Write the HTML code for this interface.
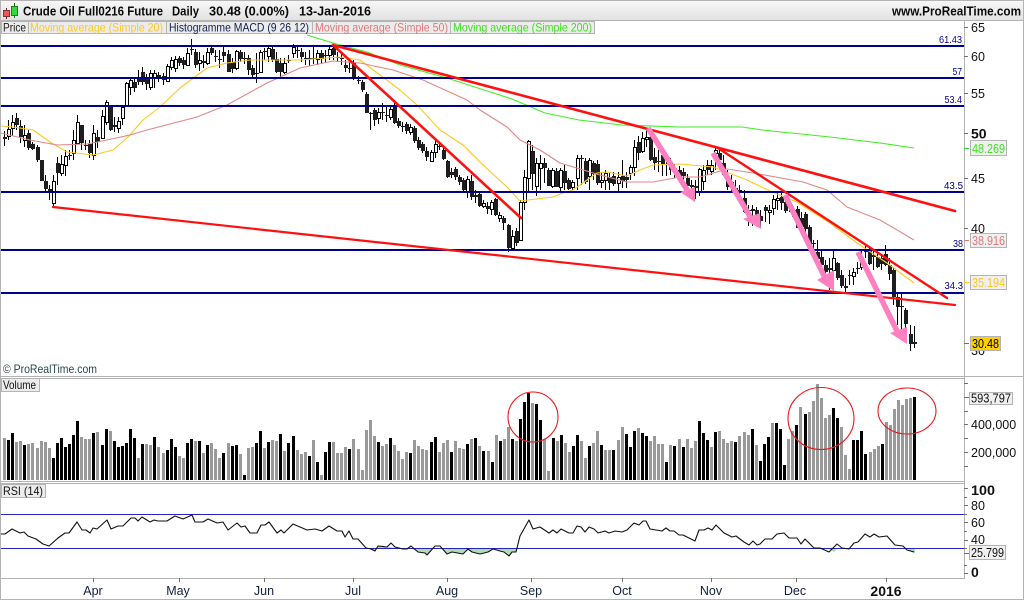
<!DOCTYPE html>
<html><head><meta charset="utf-8"><title>Crude Oil Chart</title>
<style>
html,body{margin:0;padding:0;background:#fff;width:1024px;height:600px;overflow:hidden}
svg{display:block;font-family:"Liberation Sans",sans-serif}
</style></head><body>
<svg width="1024" height="600" viewBox="0 0 1024 600" xmlns="http://www.w3.org/2000/svg">
<defs><linearGradient id="hd" x1="0" y1="0" x2="0" y2="1"><stop offset="0" stop-color="#f8f8f8"/><stop offset="1" stop-color="#e2e2e2"/></linearGradient></defs>
<rect width="1024" height="600" fill="#fff"/>
<rect x="0" y="0" width="1024" height="20" fill="url(#hd)"/>

<!-- candle wicks -->
<path shape-rendering="crispEdges" stroke="#000" stroke-width="1" fill="none" d="M4.5 131V146M8.5 120V140M12.5 115V136M16.5 113V130M20.5 120V143M24.5 125V147M28.5 130V150M32.5 142V150M37.5 145V162M41.5 160V181M45.5 175V192M49.5 185V200M53.5 175V207M57.5 157V185M61.5 155V176M65.5 150V176M69.5 150V160M73.5 130V160M77.5 115V143M81.5 125V150M85.5 140V150M89.5 140V158M93.5 125V160M97.5 130V148M102.5 110V138M106.5 100V125M110.5 105V131M114.5 117V132M118.5 117V133M122.5 105V125M126.5 82V106M130.5 78V95M134.5 78V92M138.5 70V85M142.5 67V85M146.5 74V90M150.5 70V90M154.5 70V88M158.5 72V82M163.5 73V85M167.5 64V82M171.5 57V70M175.5 56V72M179.5 56V66M183.5 57V69M187.5 48V66M191.5 39V55M195.5 49V68M199.5 52V71M203.5 55V68M207.5 48V65M211.5 45V55M215.5 50V62M219.5 50V68M223.5 47V62M228.5 50V72M232.5 58V73M236.5 50V70M240.5 50V62M244.5 52V64M248.5 55V75M252.5 65V78M256.5 53V83M260.5 50V73M264.5 48V60M268.5 46V62M272.5 47V62M276.5 52V73M280.5 58V78M284.5 58V74M288.5 55V63M293.5 44V58M297.5 46V58M301.5 48V62M305.5 52V65M309.5 50V66M313.5 47V64M317.5 50V65M321.5 50V64M325.5 50V63M329.5 47V60M333.5 46V60M337.5 52V62M341.5 54V65M345.5 60V72M349.5 62V73M353.5 60V80M358.5 76V84M362.5 80V92M366.5 92V113M370.5 112V130M374.5 108V126M378.5 108V124M382.5 103V120M386.5 106V122M390.5 105V120M394.5 103V124M398.5 118V128M402.5 122V132M406.5 122V134M410.5 124V135M414.5 126V143M418.5 137V150M422.5 142V153M426.5 147V161M431.5 150V162M435.5 138V158M439.5 142V150M443.5 147V160M447.5 160V178M451.5 168V178M455.5 167V180M459.5 175V185M463.5 178V192M467.5 176V198M471.5 175V200M475.5 190V203M479.5 192V207M483.5 200V208M487.5 202V214M491.5 200V215M495.5 198V216M499.5 212V222M503.5 216V230M508.5 224V252M512.5 230V250M516.5 228V246M520.5 200V240M524.5 170V210M528.5 140V192M532.5 145V190M536.5 158V196M540.5 155V190M544.5 158V183M548.5 168V186M552.5 168V188M556.5 168V187M560.5 168V192M564.5 165V190M568.5 178V190M572.5 180V190M577.5 155V190M581.5 155V185M585.5 158V184M589.5 158V190M593.5 161V180M597.5 160V185M601.5 172V188M605.5 170V190M609.5 172V190M613.5 172V186M618.5 172V192M622.5 160V188M626.5 172V188M630.5 165V180M634.5 140V176M638.5 136V160M642.5 132V153M646.5 128V147M650.5 135V161M654.5 148V170M658.5 150V172M662.5 152V176M666.5 158V176M670.5 158V175M674.5 164V178M679.5 166V182M683.5 168V182M687.5 174V192M691.5 180V197M695.5 180V199M699.5 168V196M703.5 165V190M707.5 160V175M711.5 160V175M715.5 146V170M719.5 150V165M723.5 155V176M727.5 170V190M731.5 175V192M735.5 180V195M739.5 185V198M744.5 190V213M748.5 205V226M752.5 205V226M756.5 207V222M760.5 210V228M765.5 205V222M769.5 205V224M773.5 195V215M777.5 192V210M781.5 192V210M785.5 200V213M789.5 200V212M793.5 207V218M797.5 206V228M801.5 212V230M805.5 212V233M809.5 225V250M813.5 240V255M817.5 240V263M821.5 250V268M825.5 260V275M829.5 258V290M833.5 250V272M837.5 262V280M841.5 270V288M845.5 278V292M849.5 270V285M853.5 268V285M857.5 262V274M861.5 250V270M865.5 246V258M869.5 248V265M873.5 250V270M877.5 252V268M881.5 254V270M885.5 245V266M889.5 258V280M893.5 268V305M897.5 294V325M901.5 294V330M905.5 308V336M910.5 325V351M914.5 326V348"/>
<!-- black candle bodies -->
<path shape-rendering="crispEdges" stroke="#1e1e1e" stroke-width="4" fill="none" d="M5 137v2M17 118v7M21 126v11M29 133v15M33 144v5M38 147v13M42 160v21M46 181v8M50 189v4M58 163v10M70 155v1M82 125v18M86 145v1M90 144v9M98 137v5M111 107v23M115 125v2M135 82v6M139 78v4M143 72v10M147 79v5M159 75v3M164 76v4M180 58v5M184 60v5M192 49v1M196 52v13M204 61v2M212 48v5M216 56v1M220 59v1M224 52v4M229 54v18M233 62v7M241 52v7M245 58v1M249 58v12M253 68v7M257 73v1M265 51v1M273 49v11M277 59v13M281 63v9M289 60v1M298 50v1M302 52v5M306 58v1M310 58v1M314 58v1M322 53v6M326 55v1M334 48v7M338 57v1M342 58v1M346 65v3M350 68v1M354 63v14M359 80v1M363 82v8M367 94v19M371 113v1M375 110v10M383 112v1M387 115v1M395 107v16M399 121v5M403 126v1M407 124v7M415 128v13M419 140v8M423 144v7M427 151v6M440 146v1M444 150v9M448 161v16M452 172v3M456 169v8M460 177v5M464 180v10M472 181v16M476 195v2M480 194v12M488 206v3M496 199v16M504 218v5M509 225v23M517 231v12M533 151v23M545 163v5M549 170v16M557 171v16M565 171v12M569 180v9M582 158v1M586 161v21M594 163v11M598 164v19M610 177v6M614 176v8M623 176v5M627 177v3M639 142v11M651 137v23M655 157v6M659 161v1M663 155v9M667 164v1M671 163v7M675 168v4M680 170v8M684 172v4M688 178v8M692 185v2M696 186v2M708 165v5M720 153v7M724 163v12M728 177v10M732 182v6M736 188v2M740 190v1M745 198v14M749 210v1M753 209v2M757 210v10M761 216v5M766 207v4M782 197v6M786 202v9M790 205v1M794 210v7M798 209v19M802 218v9M806 214v15M810 227v22M814 243v1M818 252v7M822 257v8M826 265v7M830 268v2M838 263v15M842 275v11M846 286v2M850 275v1M858 268v1M866 250v2M870 251v13M874 255v2M878 257v10M882 258v6M886 254v11M890 265v9M894 270v27M898 297v10M902 306v1M906 310v14M911 334v10M915 342v2"/>
<!-- white candle bodies -->
<path shape-rendering="crispEdges" fill="#fff" stroke="#000" stroke-width="1" d="M7.5 129.500h3v7h-3zM11.500 122.500h3v6h-3zM23.500 135.500h3v5h-3zM52.500 181.500h3v22h-3zM60.500 164.500h3v9h-3zM64.500 156.500h3v9h-3zM72.500 140.500h3v13h-3zM76.500 122.500h3v21h-3zM92.500 133.500h3v22h-3zM101.500 116.500h3v22h-3zM105.500 102.500h3v20h-3zM117.500 121.500h3v7h-3zM121.500 107.500h3v11h-3zM125.500 83.500h3v22h-3zM129.500 80.500h3v7h-3zM149.500 73.500h3v14h-3zM153.500 73.500h3v4h-3zM166.500 66.500h3v15h-3zM170.500 60.500h3v7h-3zM174.500 59.500h3v9h-3zM186.500 53.500h3v12h-3zM198.500 60.500h3v3h-3zM206.500 52.500h3v11h-3zM235.500 51.500h3v17h-3zM259.500 52.500h3v20h-3zM267.500 48.500h3v8h-3zM283.500 63.500h3v9h-3zM292.500 47.500h3v6h-3zM316.500 53.500h3v6h-3zM328.500 49.500h3v6h-3zM377.500 112.500h3v6h-3zM389.500 109.500h3v8h-3zM409.500 127.500h3v5h-3zM430.500 152.500h3v9h-3zM434.500 144.500h3v8h-3zM466.500 179.500h3v12h-3zM482.500 203.500h3v3h-3zM490.500 202.500h3v7h-3zM498.500 215.500h3v3h-3zM511.500 236.500h3v12h-3zM519.500 202.500h3v38h-3zM523.500 177.500h3v25h-3zM527.500 141.500h3v37h-3zM535.500 163.500h3v23h-3zM539.500 163.500h3v5h-3zM551.500 170.500h3v16h-3zM559.500 170.500h3v17h-3zM571.500 182.500h3v5h-3zM576.500 158.500h3v20h-3zM588.500 160.500h3v16h-3zM600.500 180.500h3v2h-3zM604.500 173.500h3v7h-3zM617.500 177.500h3v6h-3zM629.500 167.500h3v6h-3zM633.500 147.500h3v20h-3zM641.500 138.500h3v13h-3zM645.500 137.500h3v2h-3zM698.500 169.500h3v23h-3zM702.500 170.500h3v11h-3zM710.500 165.500h3v6h-3zM714.500 150.500h3v3h-3zM768.500 210.500h3v2h-3zM772.500 199.500h3v9h-3zM776.500 198.500h3v2h-3zM832.500 258.500h3v12h-3zM852.500 272.500h3v4h-3zM860.500 258.500h3v9h-3z"/>

<!-- moving averages -->
<g fill="none" stroke-linejoin="round">
<path stroke="#ffc820" stroke-width="1.1" d="M1 126L13 127L33 130L50 142L67 152L93 155L113 150L128 137L143 120L160 107L180 88L207 68L227 63L250 60L300 60L340 57L360 60L380 75L400 90L417 105L440 130L463 145L483 165L507 187L520 201L553 197L563 193L573 190L587 180L597 173L607 172L627 176L640 170L653 165L680 164L713 167L747 180L770 191L797 202L830 223L857 243L887 263L914 283"/>
<path stroke="#e08888" stroke-width="1.1" d="M1 133L30 140L57 145L87 144L107 140L130 135L147 130L197 117L227 105L267 83L300 68L333 61L360 63L393 70L423 80L467 100L480 110L507 127L520 140L540 150L560 163L580 169L600 175L627 182L653 182L680 177L700 177L727 169L753 173L803 182L827 190L847 207L880 220L914 240"/>
<path stroke="#40ee20" stroke-width="1.1" d="M307 35L333 43L367 52L400 65L447 78L512 99L545 113L579 120L622 125L679 127L742 127L762 130L830 137L880 143L914 148"/>
</g>

<!-- horizontal levels -->
<path shape-rendering="crispEdges" stroke="#000090" stroke-width="2" fill="none" d="M1 46H964M1 78H964M1 106H964M1 192H964M1 250H964M1 293H964"/>

<!-- red trend lines -->
<g fill="none" stroke="#ff1010" stroke-linecap="round">
<path stroke-width="2.2" d="M53 207L955 305"/>
<path stroke-width="2.6" d="M333 45L955 211"/>
<path stroke-width="2.6" d="M333 45L521 218"/>
<path stroke-width="2.4" d="M718 148L947 298"/>
</g>

<!-- pink arrows -->
<g fill="none" stroke="#ff80c0" stroke-width="5.500">
<path d="M648 128L689 193"/>
<path d="M713 153L752 220"/>
<path d="M785 195L826 280"/>
<path d="M858 252L899 335"/>
</g>
<g fill="#ff80c0" stroke="none">
<path d="M680 192L695 187L695 202Z"/>
<path d="M743 219L760 213L761 229Z"/>
<path d="M817 280L834 270L834 291Z"/>
<path d="M890 333L907 327L907 344Z"/>
</g>

<!-- level labels -->
<g fill="#000090" font-size="10">
<text x="939" y="43" textLength="23" lengthAdjust="spacingAndGlyphs">61.43</text>
<text x="952.500" y="75" textLength="9.500" lengthAdjust="spacingAndGlyphs">57</text>
<text x="944.500" y="103" textLength="17.500" lengthAdjust="spacingAndGlyphs">53.4</text>
<text x="944" y="189" textLength="19" lengthAdjust="spacingAndGlyphs">43.5</text>
<text x="953" y="247" textLength="10" lengthAdjust="spacingAndGlyphs">38</text>
<text x="944.500" y="289" textLength="18.500" lengthAdjust="spacingAndGlyphs">34.3</text>
</g>
<text x="3" y="373" font-size="12" fill="#2a4a4a" textLength="94" lengthAdjust="spacingAndGlyphs">© ProRealTime.com</text>

<!-- legend -->
<g fill="#ececec" stroke="#b4b4b4" shape-rendering="crispEdges">
<rect x="1.500" y="21.500" width="27" height="12"/><rect x="28.500" y="21.500" width="138" height="12"/><rect x="166.500" y="21.500" width="146" height="12"/><rect x="312.500" y="21.500" width="138" height="12"/><rect x="450.500" y="21.500" width="144" height="12"/>
</g>
<g font-size="12">
<text x="3" y="31.500" fill="#1a1a1a" textLength="23" lengthAdjust="spacingAndGlyphs">Price</text>
<text x="30" y="31.500" fill="#ffc820" textLength="133" lengthAdjust="spacingAndGlyphs">Moving average (Simple 20)</text>
<text x="169" y="31.500" fill="#102050" textLength="140" lengthAdjust="spacingAndGlyphs">Histogramme MACD (9 26 12)</text>
<text x="315" y="31.500" fill="#e07878" textLength="133" lengthAdjust="spacingAndGlyphs">Moving average (Simple 50)</text>
<text x="453" y="31.500" fill="#40e020" textLength="139" lengthAdjust="spacingAndGlyphs">Moving average (Simple 200)</text>
</g>

<!-- volume -->
<path shape-rendering="crispEdges" stroke="#999" stroke-width="3" fill="none" d="M4.500 438V480M16.500 442V480M20.500 441V480M28.500 444V480M32.500 443V480M37.500 448V480M41.500 441V480M45.500 442V480M49.500 448V480M81.500 437V480M85.500 439V480M89.500 439V480M97.500 432V480M110.500 431V480M138.500 458V480M146.500 444V480M150.500 445V480M158.500 447V480M163.500 453V480M179.500 456V480M183.500 458V480M195.500 441V480M203.500 453V480M211.500 443V480M215.500 449V480M219.500 458V480M228.500 443V480M240.500 454V480M248.500 448V480M252.500 447V480M264.500 448V480M272.500 440V480M276.500 441V480M284.500 451V480M297.500 450V480M301.500 454V480M305.500 452V480M313.500 440V480M321.500 475V480M333.500 442V480M337.500 453V480M341.500 453V480M345.500 447V480M353.500 439V480M358.500 449V480M362.500 470V480M366.500 430V480M370.500 420V480M374.500 436V480M382.500 446V480M386.500 444V480M394.500 445V480M398.500 451V480M402.500 459V480M406.500 452V480M414.500 440V480M418.500 446V480M422.500 449V480M426.500 450V480M439.500 452V480M443.500 443V480M447.500 440V480M455.500 441V480M459.500 448V480M463.500 449V480M471.500 439V480M479.500 446V480M488.500 451V480M496.500 435V480M504.500 439V480M508.500 427V480M516.500 441V480M532.500 403V480M544.500 439V480M548.500 471V480M557.500 441V480M565.500 443V480M569.500 452V480M581.500 441V480M585.500 458V480M593.500 443V480M597.500 431V480M605.500 450V480M609.500 450V480M618.500 440V480M622.500 427V480M638.500 428V480M650.500 441V480M654.500 436V480M658.500 444V480M662.500 444V480M670.500 445V480M679.500 439V480M687.500 439V480M691.500 448V480M695.500 441V480M711.500 447V480M719.500 431V480M723.500 439V480M727.500 443V480M731.500 441V480M739.500 436V480M744.500 432V480M748.500 435V480M756.500 445V480M772.500 423V480M788.500 439V480M792.500 431V480M800.500 407V480M809.500 412V480M813.500 401V480M817.500 384V480M821.500 398V480M825.500 418V480M829.500 415V480M841.500 427V480M845.500 455V480M849.500 469V480M870.500 452V480M874.500 449V480M878.500 446V480M886.500 422V480M890.500 425V480M894.500 409V480M898.500 400V480M902.500 405V480M906.500 399V480M910.500 398V480"/>
<path shape-rendering="crispEdges" stroke="#000" stroke-width="3" fill="none" d="M8.500 440V480M12.500 433V480M24.500 445V480M53.500 458V480M57.500 443V480M61.500 438V480M65.500 447V480M69.500 444V480M73.500 435V480M77.500 421V480M93.500 433V480M102.500 445V480M106.500 429V480M114.500 441V480M118.500 447V480M122.500 446V480M126.500 443V480M130.500 429V480M134.500 438V480M142.500 444V480M154.500 437V480M167.500 450V480M171.500 439V480M175.500 447V480M187.500 443V480M191.500 439V480M199.500 441V480M207.500 445V480M223.500 453V480M232.500 446V480M236.500 445V480M244.500 475V480M256.500 443V480M260.500 431V480M268.500 442V480M280.500 434V480M288.500 443V480M293.500 436V480M309.500 456V480M317.500 462V480M325.500 452V480M329.500 442V480M349.500 449V480M378.500 442V480M390.500 438V480M410.500 453V480M431.500 442V480M435.500 437V480M451.500 452V480M467.500 444V480M475.500 438V480M483.500 451V480M492.500 462V480M500.500 441V480M512.500 439V480M520.500 419V480M524.500 402V480M528.500 393V480M536.500 404V480M540.500 420V480M553.500 438V480M561.500 435V480M573.500 446V480M577.500 435V480M589.500 446V480M601.500 445V480M613.500 450V480M626.500 434V480M630.500 447V480M634.500 431V480M642.500 433V480M646.500 436V480M666.500 462V480M674.500 446V480M683.500 447V480M699.500 421V480M703.500 433V480M707.500 440V480M715.500 432V480M735.500 442V480M752.500 429V480M760.500 461V480M764.500 444V480M768.500 437V480M776.500 423V480M780.500 429V480M784.500 465V480M796.500 425V480M805.500 414V480M833.500 408V480M837.500 418V480M853.500 440V480M857.500 440V480M861.500 431V480M865.500 454V480M882.500 444V480M914.500 397V480"/>
<g fill="none" stroke="#f01818" stroke-width="1.100">
<ellipse cx="533" cy="417" rx="25" ry="25"/>
<ellipse cx="821" cy="418.500" rx="33" ry="31"/>
<ellipse cx="907" cy="411" rx="29" ry="23"/>
</g>

<!-- RSI -->
<path fill="#b4dcb4" stroke="none" d="M367 548L371 549L375 551L378 546L400 548ZM410 548L418 552L425 553L428 555L433 548ZM441 548L447 554L452 552L463 554L468 548L472 552L480 554L488 552L493 548L500 551L504 552L509 556L512 552L516 552L517 548ZM827 548L829 549L834 552L838 548ZM845 548L849 549L850 548ZM907 548L911 552L915 553L915 548Z"/>
<path shape-rendering="crispEdges" stroke="#2424c0" stroke-width="1" fill="none" d="M1 514.500H964M1 548.500H964"/>
<path fill="none" stroke="#111" stroke-width="1.100" stroke-linejoin="round" d="M1 534L5 534L12 529L20 533L24 532L28 536L36 539L43 544L49 546L58 538L65 533L69 533L77 522L82 530L86 530L90 533L93 528L97 529L107 520L111 529L118 526L123 526L131 518L135 518L138 521L142 517L150 522L154 520L158 521L167 521L175 516L183 519L192 515L195 522L203 522L208 519L217 523L223 522L228 530L237 523L241 527L245 526L250 533L257 533L261 525L265 525L269 522L277 533L281 530L284 533L293 524L300 527L307 530L315 529L322 531L329 526L337 531L342 531L345 537L349 531L353 539L358 539L366 548L371 549L375 551L378 546L387 547L391 543L395 547L403 549L407 549L411 546L418 552L425 553L427 555L435 546L440 546L447 554L452 552L463 554L468 549L472 552L480 554L488 552L493 549L500 551L504 552L509 556L512 552L516 552L520 536L529 520L533 529L540 527L549 533L553 530L557 533L561 529L569 533L573 533L577 526L581 527L585 532L589 527L594 529L598 533L605 531L609 533L615 531L622 532L627 530L634 523L639 525L643 521L646 521L650 529L662 531L666 528L670 531L674 531L679 535L683 535L695 541L699 530L704 530L708 528L712 530L716 525L724 533L732 537L736 536L744 542L749 545L753 541L757 545L760 544L765 539L772 539L777 534L784 533L789 538L797 538L801 544L805 539L814 548L820 548L829 552L837 544L842 548L849 549L854 543L858 542L865 534L870 537L874 534L879 537L887 536L895 545L903 546L907 550L914 552"/>

<!-- frames -->
<g shape-rendering="crispEdges" stroke="#b4b4b4" stroke-width="1" fill="none">
<path d="M0 .5H1024M0 20.500H1024M.5 0V600M1023.500 0V600M0 376.500H1024M0 378.500H964M0 481.500H964M0 483.500H964M0 578.500H964M0 599.500H1024"/>
<path d="M964.500 20V579"/>
</g>
<!-- axis ticks -->
<path shape-rendering="crispEdges" stroke="#707070" stroke-width="1" fill="none" d="M964 27.500h4M964 56.500h4M964 93.500h4M964 133.500h4M964 178.500h4M964 228.500h4M964 343.500h5M964 383.500h4M964 397.500h5M964 411.500h4M964 424.500h4M964 438.500h4M964 452.500h4M964 466.500h4M964 488.500h4M964 497.500h3M964 505.500h4M964 514.500h3M964 522.500h4M964 531.500h3M964 540.500h4M964 548.500h3M964 553.500h5M964 565.500h3M964 573.500h4M93.500 578v4M179.500 578v4M264.500 578v4M353.500 578v4M447.500 578v4M531.500 578v4M622.500 578v4M711.500 578v4M796.500 578v4M886.500 578v4"/>
<path shape-rendering="crispEdges" stroke-width="1" fill="none" stroke="#30d030" d="M964 148.500h5"/>
<path shape-rendering="crispEdges" stroke-width="1" fill="none" stroke="#e07878" d="M964 240.500h5"/>
<path shape-rendering="crispEdges" stroke-width="1" fill="none" stroke="#ffc820" d="M964 282.500h5"/>

<!-- axis labels -->
<g font-size="12.500" fill="#111">
<text x="971" y="32">65</text><text x="971" y="61">60</text><text x="971" y="98">55</text>
<text x="971" y="138.500" font-weight="bold" font-size="14">50</text>
<text x="971" y="183">45</text><text x="971" y="233">40</text><text x="971" y="355">30</text>
<text x="971" y="429">400,000</text><text x="971" y="457">200,000</text>
<text x="971" y="510">80</text><text x="971" y="527">60</text><text x="971" y="544">40</text>
</g>
<g font-size="14" font-weight="bold" fill="#111"><text x="971" y="495" textLength="24" lengthAdjust="spacingAndGlyphs">100</text><text x="971" y="577">0</text></g>

<!-- value tags -->
<g shape-rendering="crispEdges" stroke="#b4b4b4" fill="#f0f0f0">
<rect x="970.500" y="140.500" width="36" height="15"/>
<rect x="970.500" y="233.500" width="36" height="14"/>
<rect x="970.500" y="275.500" width="36" height="14"/>
<rect x="970.500" y="336.500" width="30" height="14" fill="#ffd000"/>
<rect x="969.500" y="392.500" width="43" height="12"/>
<rect x="969.500" y="545.500" width="36" height="14"/>
</g>
<g font-size="12.500">
<text x="972" y="153" fill="#40e020" textLength="33" lengthAdjust="spacingAndGlyphs">48.269</text>
<text x="972" y="245" fill="#e07878" textLength="33" lengthAdjust="spacingAndGlyphs">38.916</text>
<text x="972" y="287" fill="#ffc820" textLength="33" lengthAdjust="spacingAndGlyphs">35.194</text>
<text x="972" y="348" fill="#000" textLength="27" lengthAdjust="spacingAndGlyphs">30.48</text>
<text x="971" y="402.500" fill="#111" textLength="40" lengthAdjust="spacingAndGlyphs">593,797</text>
<text x="971" y="557" fill="#111" textLength="33" lengthAdjust="spacingAndGlyphs">25.799</text>
</g>

<!-- panel tags -->
<g shape-rendering="crispEdges" stroke="#b4b4b4" fill="#ececec">
<rect x="1.500" y="378.500" width="38" height="13"/>
<rect x="1.500" y="484.500" width="44" height="13"/>
</g>
<text x="3" y="389" font-size="12" fill="#111" textLength="33" lengthAdjust="spacingAndGlyphs">Volume</text>
<text x="3" y="495" font-size="12" fill="#111" textLength="40" lengthAdjust="spacingAndGlyphs">RSI (14)</text>

<!-- months -->
<g font-size="12.500" fill="#102040" text-anchor="middle">
<text x="93" y="595">Apr</text><text x="178" y="595">May</text><text x="264" y="595">Jun</text><text x="353" y="595">Jul</text><text x="447" y="595">Aug</text><text x="531" y="595">Sep</text><text x="622" y="595">Oct</text><text x="711" y="595">Nov</text><text x="795" y="595">Dec</text>
<text x="886" y="596" font-weight="bold" font-size="14" fill="#111">2016</text>
</g>

<!-- header -->
<path stroke="#802020" stroke-width="1" shape-rendering="crispEdges" d="M6.500 8V19"/>
<rect x="3.500" y="10.500" width="6" height="6" fill="#e85858" stroke="#903030" stroke-width="1" shape-rendering="crispEdges"/>
<path stroke="#207020" stroke-width="1" shape-rendering="crispEdges" d="M14.500 3V18"/>
<rect x="11.500" y="6.500" width="6" height="9" fill="#38d838" stroke="#208020" stroke-width="1" shape-rendering="crispEdges"/>
<g font-size="13" font-weight="bold" fill="#0a0a0a">
<text x="23" y="15.500" textLength="140" lengthAdjust="spacingAndGlyphs">Crude Oil Full0216 Future</text>
<text x="172" y="15.500" textLength="27" lengthAdjust="spacingAndGlyphs">Daily</text>
<text x="209" y="15.500" textLength="80" lengthAdjust="spacingAndGlyphs">30.48 (0.00%)</text>
<text x="299" y="15.500" textLength="72" lengthAdjust="spacingAndGlyphs">13-Jan-2016</text>
<text x="892" y="15.500" textLength="129" lengthAdjust="spacingAndGlyphs">www.ProRealTime.com</text>
</g>
</svg>
</body></html>
